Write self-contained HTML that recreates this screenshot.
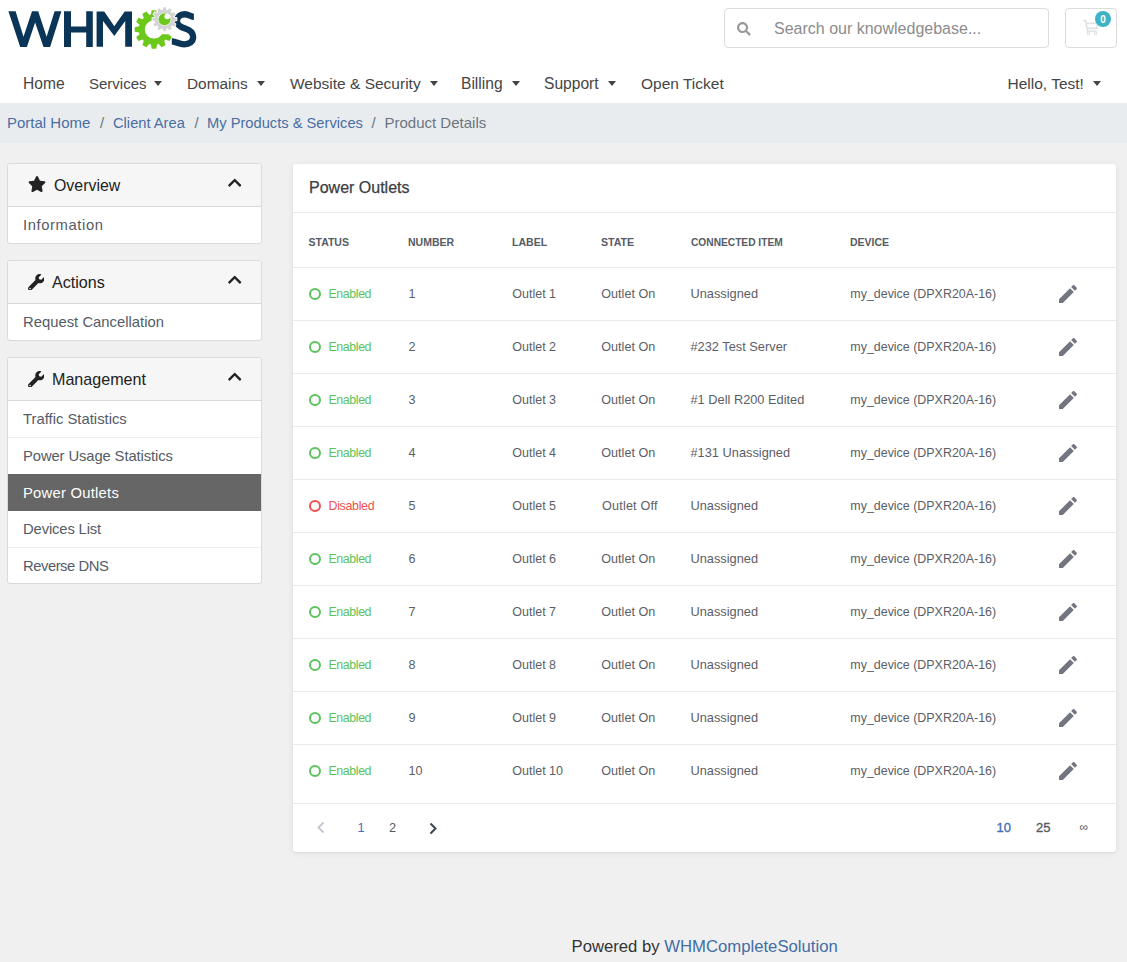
<!DOCTYPE html>
<html><head><meta charset="utf-8"><style>
html,body{margin:0;padding:0}
body{width:1127px;height:962px;overflow:hidden;position:relative;background:#f0f0f0;font-family:"Liberation Sans",sans-serif}
.t{position:absolute;white-space:nowrap;line-height:1;font-family:"Liberation Sans",sans-serif}
</style></head><body>
<div style="position:absolute;left:0;top:0;width:1127px;height:103px;background:#fff"></div><svg width="210" height="60" style="position:absolute;left:0;top:0" viewBox="0 0 210 60">
<defs><clipPath id="cg"><path d="M0,0H157V34.3H210V60H0Z"/></clipPath></defs>
<path fill="#0b3556" d="M8.4,11.2 L15.6,11.2 L23.5,36.8 L32,11.2 L38.2,11.2 L46.6,36.8 L54.6,11.2 L61.4,11.2 L50.1,46.9 L43.5,46.9 L35.1,22.6 L26.9,46.9 L20.2,46.9Z"/>
<path fill="#0b3556" d="M64,11.2H71V26.6H86.2V11.2H92.8V46.9H86.2V32.4H71V46.9H64Z"/>
<path fill="#0b3556" d="M96.6,11.4 L104.2,11.4 L114.3,26.3 L124.7,11.4 L132,11.4 L132,46.8 L125.2,46.8 L125.2,21.1 L114.3,36 L103,21.1 L103,46.8 L96.6,46.8Z"/>
<path fill="none" stroke="#0b3556" stroke-width="6.3" d="M193.9,16.9 C191.6,16.9 188.6,14.25 184.6,14.25 C179.9,14.25 176.95,16.9 176.95,20.9 C176.95,25.4 180.8,27.1 185.2,28.5 C190.3,30.1 193.15,32.4 193.15,37.1 C193.15,41.9 189.3,44.35 184.2,44.35 C179.6,44.35 174.6,41.4 171.8,41.4"/>
<path fill="#6cc91b" fill-rule="evenodd" clip-path="url(#cg)" d="M157.96,14.62 L157.16,14.43 L156.26,10.13 L151.74,10.13 L150.84,14.43 L150.04,14.62 L149.25,14.86 L146.33,11.58 L142.41,13.84 L143.78,18.01 L143.18,18.58 L142.61,19.18 L138.44,17.81 L136.18,21.73 L139.46,24.65 L139.22,25.44 L139.03,26.24 L134.73,27.14 L134.73,31.66 L139.03,32.56 L139.22,33.36 L139.46,34.15 L136.18,37.07 L138.44,40.99 L142.61,39.62 L143.18,40.22 L143.78,40.79 L142.41,44.96 L146.33,47.22 L149.25,43.94 L150.04,44.18 L150.84,44.37 L151.74,48.67 L156.26,48.67 L157.16,44.37 L157.96,44.18 L158.75,43.94 L161.67,47.22 L165.59,44.96 L164.22,40.79 L164.82,40.22 L165.39,39.62 L169.56,40.99 L171.82,37.07 L168.54,34.15 L168.78,33.36 L168.97,32.56 L173.27,31.66 L173.27,27.14 L168.97,26.24 L168.78,25.44 L168.54,24.65 L171.82,21.73 L169.56,17.81 L165.39,19.18 L164.82,18.58 L164.22,18.01 L165.59,13.84 L161.67,11.58 L158.75,14.86ZM144.80,29.40 a9.2,9.2 0 1,0 18.4,0 a9.2,9.2 0 1,0 -18.4,0Z"/>
<path fill="#d4d4d4" fill-rule="evenodd" stroke="#fff" stroke-width="1.6" paint-order="stroke" d="M166.98,9.93 L166.29,9.77 L165.72,7.16 L163.28,7.16 L162.71,9.77 L162.02,9.93 L161.33,10.14 L159.54,8.17 L157.43,9.38 L158.24,11.92 L157.71,12.41 L157.22,12.94 L154.68,12.13 L153.47,14.24 L155.44,16.03 L155.23,16.72 L155.07,17.41 L152.46,17.98 L152.46,20.42 L155.07,20.99 L155.23,21.68 L155.44,22.37 L153.47,24.16 L154.68,26.27 L157.22,25.46 L157.71,25.99 L158.24,26.48 L157.43,29.02 L159.54,30.23 L161.33,28.26 L162.02,28.47 L162.71,28.63 L163.28,31.24 L165.72,31.24 L166.29,28.63 L166.98,28.47 L167.67,28.26 L169.46,30.23 L171.57,29.02 L170.76,26.48 L171.29,25.99 L171.78,25.46 L174.32,26.27 L175.53,24.16 L173.56,22.37 L173.77,21.68 L173.93,20.99 L176.54,20.42 L176.54,17.98 L173.93,17.41 L173.77,16.72 L173.56,16.03 L175.53,14.24 L174.32,12.13 L171.78,12.94 L171.29,12.41 L170.76,11.92 L171.57,9.38 L169.46,8.17 L167.67,10.14ZM158.00,19.20 a6.5,6.5 0 1,0 13.0,0 a6.5,6.5 0 1,0 -13.0,0Z"/>
<circle cx="164.5" cy="19.3" r="6" fill="#6cc91b"/><circle cx="167.2" cy="16.5" r="2.8" fill="#fff"/>
</svg><div style="position:absolute;left:724px;top:8px;width:323px;height:38px;border:1px solid #dcdcdc;border-radius:4px;background:#fff"></div><svg style="position:absolute;left:737px;top:22px" width="13.7" height="13.7" viewBox="0 0 512 512"><path fill="#999" d="M505 442.7L405.3 343c-4.5-4.5-10.6-7-17-7H372c27.6-35.3 44-79.7 44-128C416 93.1 322.9 0 208 0S0 93.1 0 208s93.1 208 208 208c48.3 0 92.7-16.4 128-44v16.3c0 6.4 2.5 12.5 7 17l99.7 99.7c9.4 9.4 24.6 9.4 33.9 0l28.3-28.3c9.4-9.4 9.4-24.6.1-34zM208 336c-70.7 0-128-57.2-128-128 0-70.7 57.2-128 128-128 70.7 0 128 57.2 128 128 0 70.7-57.2 128-128 128z"/></svg><div class="t" style="left:774px;top:21.00px;font-size:16px;color:#8c8c8c;font-weight:normal;letter-spacing:0px;">Search our knowledgebase...</div><div style="position:absolute;left:1065px;top:8px;width:50px;height:38px;border:1px solid #dcdcdc;border-radius:4px;background:#fff"></div><svg style="position:absolute;left:1082px;top:18px" width="18" height="17" viewBox="0 0 18 17"><path d="M1,2.6 H3.6 L5.6,13.2 H14.6 M4.3,5.4 H15.6 L14.8,10.4 H5.1" fill="none" stroke="#e2e2e2" stroke-width="1.6"/><circle cx="6.5" cy="15.3" r="1.3" fill="none" stroke="#e2e2e2" stroke-width="1.1"/><circle cx="13.5" cy="15.3" r="1.3" fill="none" stroke="#e2e2e2" stroke-width="1.1"/></svg><div style="position:absolute;left:1095px;top:11px;width:16px;height:16px;border-radius:50%;background:#3fb3c6;color:#fff;font:bold 10px/18.3px 'Liberation Sans',sans-serif;text-align:center">0</div><div class="t" style="left:23px;top:76.01px;font-size:15.6px;color:#454545;font-weight:normal;letter-spacing:0px;">Home</div><div class="t" style="left:89px;top:76.01px;font-size:15px;color:#454545;font-weight:normal;letter-spacing:0px;">Services</div><div style="position:absolute;left:154px;top:81px;width:0;height:0;border-left:4.5px solid transparent;border-right:4.5px solid transparent;border-top:5px solid #444"></div><div class="t" style="left:187px;top:76.01px;font-size:15.4px;color:#454545;font-weight:normal;letter-spacing:0px;">Domains</div><div style="position:absolute;left:257px;top:81px;width:0;height:0;border-left:4.5px solid transparent;border-right:4.5px solid transparent;border-top:5px solid #444"></div><div class="t" style="left:290px;top:76.00px;font-size:15.5px;color:#454545;font-weight:normal;letter-spacing:0px;">Website &amp; Security</div><div style="position:absolute;left:429.5px;top:81px;width:0;height:0;border-left:4.5px solid transparent;border-right:4.5px solid transparent;border-top:5px solid #444"></div><div class="t" style="left:461px;top:76.01px;font-size:15.6px;color:#454545;font-weight:normal;letter-spacing:0px;">Billing</div><div style="position:absolute;left:511.5px;top:81px;width:0;height:0;border-left:4.5px solid transparent;border-right:4.5px solid transparent;border-top:5px solid #444"></div><div class="t" style="left:544px;top:76.01px;font-size:15.6px;color:#454545;font-weight:normal;letter-spacing:0px;">Support</div><div style="position:absolute;left:608px;top:81px;width:0;height:0;border-left:4.5px solid transparent;border-right:4.5px solid transparent;border-top:5px solid #444"></div><div class="t" style="left:641px;top:76.00px;font-size:15.5px;color:#454545;font-weight:normal;letter-spacing:0px;">Open Ticket</div><div class="t" style="left:1007.5px;top:76.00px;font-size:15.5px;color:#454545;font-weight:normal;letter-spacing:0px;">Hello, Test!</div><div style="position:absolute;left:1092.5px;top:81px;width:0;height:0;border-left:4.5px solid transparent;border-right:4.5px solid transparent;border-top:5px solid #444"></div><div style="position:absolute;left:0;top:103px;width:1127px;height:40px;background:#e9ecef"></div><div class="t" style="left:7px;top:115.01px;font-size:15px;color:#4a6ea3;font-weight:normal;letter-spacing:0px;">Portal Home</div><div class="t" style="left:100px;top:115.01px;font-size:15px;color:#6c757d;font-weight:normal;letter-spacing:0px;">/</div><div class="t" style="left:113px;top:116.01px;font-size:14.7px;color:#4a6ea3;font-weight:normal;letter-spacing:0px;">Client Area</div><div class="t" style="left:194.5px;top:115.01px;font-size:15px;color:#6c757d;font-weight:normal;letter-spacing:0px;">/</div><div class="t" style="left:207px;top:116.01px;font-size:14.7px;color:#4a6ea3;font-weight:normal;letter-spacing:0px;">My Products &amp; Services</div><div class="t" style="left:371.5px;top:115.01px;font-size:15px;color:#6c757d;font-weight:normal;letter-spacing:0px;">/</div><div class="t" style="left:384.5px;top:115.01px;font-size:15px;color:#6c757d;font-weight:normal;letter-spacing:0px;">Product Details</div><div style="position:absolute;left:7px;top:163px;width:253px;height:79px;border:1px solid #dadada;border-radius:3px;background:#fff;overflow:hidden"><div style="position:absolute;left:0;top:0;width:253px;height:42px;background:#f6f6f6;border-bottom:1px solid #d9d9d9"></div></div><div class="t" style="left:23px;top:218.00px;font-size:14.8px;color:#555b66;font-weight:normal;letter-spacing:0.6px;">Information</div><svg style="position:absolute;left:28px;top:176px" width="18" height="16" viewBox="0 0 576 512"><path fill="#222" d="M259.3 17.8L194 150.2 47.9 171.5c-26.2 3.8-36.7 36.1-17.7 54.6l105.7 103-25 145.5c-4.5 26.3 23.2 46 46.4 33.7L288 439.6l130.7 68.7c23.2 12.2 50.9-7.4 46.4-33.7l-25-145.5 105.7-103c19-18.5 8.5-50.8-17.7-54.6L382 150.2 316.7 17.8c-11.7-23.6-45.6-23.9-57.4 0z"/></svg><div class="t" style="left:54px;top:178.01px;font-size:15.9px;color:#222;font-weight:normal;letter-spacing:0px;">Overview</div><svg style="position:absolute;left:226.6px;top:174.6px" width="15.4" height="15.4" viewBox="0 0 448 512"><path fill="#222" d="M240.971 130.524l194.343 194.343c9.373 9.373 9.373 24.569 0 33.941l-22.667 22.667c-9.357 9.357-24.522 9.375-33.901.04L224 227.495 69.255 381.516c-9.379 9.335-24.544 9.317-33.901-.04l-22.667-22.667c-9.373-9.373-9.373-24.569 0-33.941L207.03 130.525c9.372-9.373 24.568-9.373 33.941-.001z"/></svg><div style="position:absolute;left:7px;top:260px;width:253px;height:79px;border:1px solid #dadada;border-radius:3px;background:#fff;overflow:hidden"><div style="position:absolute;left:0;top:0;width:253px;height:42px;background:#f6f6f6;border-bottom:1px solid #d9d9d9"></div></div><div class="t" style="left:23px;top:315.00px;font-size:14.8px;color:#555b66;font-weight:normal;letter-spacing:0.02px;">Request Cancellation</div><svg style="position:absolute;left:27.5px;top:273.5px" width="16.5" height="16.5" viewBox="0 0 512 512"><path fill="#222" d="M507.73 109.1c-2.24-9.03-13.54-12.09-20.12-5.51l-74.36 74.36-67.88-11.31-11.31-67.88 74.36-74.36c6.62-6.62 3.43-17.9-5.66-20.16-47.38-11.74-99.550.91-136.58 37.930-39.640 39.640-50.550 97.100-34.050 147.200L18.74 402.76c-24.99 24.99-24.99 65.51 0 90.5 24.99 24.990 65.510 24.990 90.500 0l213.21-213.21c50.12 16.71 107.47 5.68 147.37-34.22 37.07-37.07 49.7-89.32 37.91-136.73zM64 472c-13.25 0-24-10.75-24-24 0-13.26 10.75-24 24-24s24 10.74 24 24c0 13.25-10.75 24-24 24z"/></svg><div class="t" style="left:52px;top:274.01px;font-size:16.1px;color:#222;font-weight:normal;letter-spacing:0px;">Actions</div><svg style="position:absolute;left:226.6px;top:271.6px" width="15.4" height="15.4" viewBox="0 0 448 512"><path fill="#222" d="M240.971 130.524l194.343 194.343c9.373 9.373 9.373 24.569 0 33.941l-22.667 22.667c-9.357 9.357-24.522 9.375-33.901.04L224 227.495 69.255 381.516c-9.379 9.335-24.544 9.317-33.901-.04l-22.667-22.667c-9.373-9.373-9.373-24.569 0-33.941L207.03 130.525c9.372-9.373 24.568-9.373 33.941-.001z"/></svg><div style="position:absolute;left:7px;top:357px;width:253px;height:225px;border:1px solid #dadada;border-radius:3px;background:#fff;overflow:hidden"><div style="position:absolute;left:0;top:0;width:253px;height:42px;background:#f6f6f6;border-bottom:1px solid #d9d9d9"></div></div><div style="position:absolute;left:8px;top:437px;width:253px;height:1px;background:#efefef"></div><div style="position:absolute;left:8px;top:547px;width:253px;height:1px;background:#efefef"></div><div style="position:absolute;left:8px;top:474px;width:253px;height:37px;background:#666"></div><div class="t" style="left:23px;top:412.00px;font-size:14.8px;color:#555b66;font-weight:normal;letter-spacing:0.01px;">Traffic Statistics</div><div class="t" style="left:23px;top:449.01px;font-size:14.8px;color:#555b66;font-weight:normal;letter-spacing:-0.11px;">Power Usage Statistics</div><div class="t" style="left:23px;top:486.01px;font-size:14.8px;color:#fff;font-weight:normal;letter-spacing:0.24px;">Power Outlets</div><div class="t" style="left:23px;top:522.01px;font-size:14.8px;color:#555b66;font-weight:normal;letter-spacing:-0.14px;">Devices List</div><div class="t" style="left:23px;top:559.00px;font-size:14.8px;color:#555b66;font-weight:normal;letter-spacing:-0.47px;">Reverse DNS</div><svg style="position:absolute;left:27.5px;top:370.5px" width="16.5" height="16.5" viewBox="0 0 512 512"><path fill="#222" d="M507.73 109.1c-2.24-9.03-13.54-12.09-20.12-5.51l-74.36 74.36-67.88-11.31-11.31-67.88 74.36-74.36c6.62-6.62 3.43-17.9-5.66-20.16-47.38-11.74-99.550.91-136.58 37.930-39.640 39.640-50.550 97.100-34.050 147.200L18.74 402.76c-24.99 24.99-24.99 65.51 0 90.5 24.99 24.990 65.510 24.990 90.500 0l213.21-213.21c50.12 16.71 107.47 5.68 147.37-34.22 37.07-37.07 49.7-89.32 37.91-136.73zM64 472c-13.25 0-24-10.75-24-24 0-13.26 10.75-24 24-24s24 10.74 24 24c0 13.25-10.75 24-24 24z"/></svg><div class="t" style="left:52px;top:371.01px;font-size:16.1px;color:#222;font-weight:normal;letter-spacing:0px;">Management</div><svg style="position:absolute;left:226.6px;top:368.6px" width="15.4" height="15.4" viewBox="0 0 448 512"><path fill="#222" d="M240.971 130.524l194.343 194.343c9.373 9.373 9.373 24.569 0 33.941l-22.667 22.667c-9.357 9.357-24.522 9.375-33.901.04L224 227.495 69.255 381.516c-9.379 9.335-24.544 9.317-33.901-.04l-22.667-22.667c-9.373-9.373-9.373-24.569 0-33.941L207.03 130.525c9.372-9.373 24.568-9.373 33.941-.001z"/></svg><div style="position:absolute;left:293px;top:164px;width:823px;height:688px;background:#fff;border-radius:3px;box-shadow:0 1px 2px rgba(40,50,80,0.08),0 1px 7px rgba(40,50,80,0.07)"></div><div class="t" style="left:309px;top:180.00px;font-size:16px;color:#3a3d42;font-weight:normal;letter-spacing:0px;-webkit-text-stroke:0.25px #3a3d42">Power Outlets</div><div style="position:absolute;left:293px;top:212px;width:823px;height:1px;background:#e9eaef"></div><div style="position:absolute;left:293px;top:267px;width:823px;height:1px;background:#e9eaef"></div><div class="t" style="left:308.5px;top:237.00px;font-size:10.5px;color:#575b64;font-weight:bold;letter-spacing:0px;">STATUS</div><div class="t" style="left:408px;top:237.00px;font-size:10.5px;color:#575b64;font-weight:bold;letter-spacing:0px;">NUMBER</div><div class="t" style="left:512px;top:237.01px;font-size:10.6px;color:#575b64;font-weight:bold;letter-spacing:0px;">LABEL</div><div class="t" style="left:601px;top:237.01px;font-size:10.6px;color:#575b64;font-weight:bold;letter-spacing:0px;">STATE</div><div class="t" style="left:691px;top:238.01px;font-size:10.2px;color:#575b64;font-weight:bold;letter-spacing:0px;">CONNECTED ITEM</div><div class="t" style="left:850px;top:237.00px;font-size:10.5px;color:#575b64;font-weight:bold;letter-spacing:0px;">DEVICE</div><div style="position:absolute;left:309px;top:287.9px;width:8px;height:8px;border:2px solid #5cc35c;border-radius:50%"></div><div class="t" style="left:328.5px;top:288.00px;font-size:12.4px;color:#5cc35c;font-weight:normal;letter-spacing:-0.41px;">Enabled</div><div class="t" style="left:408.5px;top:288.01px;font-size:12.6px;color:#5b5e66;font-weight:normal;letter-spacing:0px;">1</div><div class="t" style="left:512.3px;top:288.01px;font-size:12.5px;color:#5b5e66;font-weight:normal;letter-spacing:0px;">Outlet 1</div><div class="t" style="left:601.3px;top:288.01px;font-size:12.6px;color:#5b5e66;font-weight:normal;letter-spacing:0px;">Outlet On</div><div class="t" style="left:690.5px;top:288.01px;font-size:12.8px;color:#5b5e66;font-weight:normal;letter-spacing:0px;">Unassigned</div><div class="t" style="left:850.3px;top:288.01px;font-size:12.45px;color:#5b5e66;font-weight:normal;letter-spacing:0px;">my_device (DPXR20A-16)</div><svg style="position:absolute;left:1055.5px;top:282px" width="24" height="24" viewBox="0 0 24 24"><path fill="#737680" d="M20.71,7.04C21.1,6.65 21.1,6 20.71,5.63L18.37,3.29C18,2.9 17.35,2.9 16.96,3.29L15.12,5.12L18.87,8.87M3,17.25V21H6.75L17.81,9.93L14.06,6.18L3,17.25Z"/></svg><div style="position:absolute;left:293px;top:320px;width:823px;height:1px;background:#e9eaef"></div><div style="position:absolute;left:309px;top:340.9px;width:8px;height:8px;border:2px solid #5cc35c;border-radius:50%"></div><div class="t" style="left:328.5px;top:341.00px;font-size:12.4px;color:#5cc35c;font-weight:normal;letter-spacing:-0.41px;">Enabled</div><div class="t" style="left:408.5px;top:341.01px;font-size:12.6px;color:#5b5e66;font-weight:normal;letter-spacing:0px;">2</div><div class="t" style="left:512.3px;top:341.01px;font-size:12.5px;color:#5b5e66;font-weight:normal;letter-spacing:0px;">Outlet 2</div><div class="t" style="left:601.3px;top:341.01px;font-size:12.6px;color:#5b5e66;font-weight:normal;letter-spacing:0px;">Outlet On</div><div class="t" style="left:690.5px;top:341.01px;font-size:12.8px;color:#5b5e66;font-weight:normal;letter-spacing:0px;">#232 Test Server</div><div class="t" style="left:850.3px;top:341.01px;font-size:12.45px;color:#5b5e66;font-weight:normal;letter-spacing:0px;">my_device (DPXR20A-16)</div><svg style="position:absolute;left:1055.5px;top:335px" width="24" height="24" viewBox="0 0 24 24"><path fill="#737680" d="M20.71,7.04C21.1,6.65 21.1,6 20.71,5.63L18.37,3.29C18,2.9 17.35,2.9 16.96,3.29L15.12,5.12L18.87,8.87M3,17.25V21H6.75L17.81,9.93L14.06,6.18L3,17.25Z"/></svg><div style="position:absolute;left:293px;top:373px;width:823px;height:1px;background:#e9eaef"></div><div style="position:absolute;left:309px;top:393.9px;width:8px;height:8px;border:2px solid #5cc35c;border-radius:50%"></div><div class="t" style="left:328.5px;top:394.00px;font-size:12.4px;color:#5cc35c;font-weight:normal;letter-spacing:-0.41px;">Enabled</div><div class="t" style="left:408.5px;top:394.01px;font-size:12.6px;color:#5b5e66;font-weight:normal;letter-spacing:0px;">3</div><div class="t" style="left:512.3px;top:394.01px;font-size:12.5px;color:#5b5e66;font-weight:normal;letter-spacing:0px;">Outlet 3</div><div class="t" style="left:601.3px;top:394.01px;font-size:12.6px;color:#5b5e66;font-weight:normal;letter-spacing:0px;">Outlet On</div><div class="t" style="left:690.5px;top:394.01px;font-size:12.8px;color:#5b5e66;font-weight:normal;letter-spacing:0px;">#1 Dell R200 Edited</div><div class="t" style="left:850.3px;top:394.01px;font-size:12.45px;color:#5b5e66;font-weight:normal;letter-spacing:0px;">my_device (DPXR20A-16)</div><svg style="position:absolute;left:1055.5px;top:388px" width="24" height="24" viewBox="0 0 24 24"><path fill="#737680" d="M20.71,7.04C21.1,6.65 21.1,6 20.71,5.63L18.37,3.29C18,2.9 17.35,2.9 16.96,3.29L15.12,5.12L18.87,8.87M3,17.25V21H6.75L17.81,9.93L14.06,6.18L3,17.25Z"/></svg><div style="position:absolute;left:293px;top:426px;width:823px;height:1px;background:#e9eaef"></div><div style="position:absolute;left:309px;top:446.9px;width:8px;height:8px;border:2px solid #5cc35c;border-radius:50%"></div><div class="t" style="left:328.5px;top:447.00px;font-size:12.4px;color:#5cc35c;font-weight:normal;letter-spacing:-0.41px;">Enabled</div><div class="t" style="left:408.5px;top:447.01px;font-size:12.6px;color:#5b5e66;font-weight:normal;letter-spacing:0px;">4</div><div class="t" style="left:512.3px;top:447.01px;font-size:12.5px;color:#5b5e66;font-weight:normal;letter-spacing:0px;">Outlet 4</div><div class="t" style="left:601.3px;top:447.01px;font-size:12.6px;color:#5b5e66;font-weight:normal;letter-spacing:0px;">Outlet On</div><div class="t" style="left:690.5px;top:447.01px;font-size:12.8px;color:#5b5e66;font-weight:normal;letter-spacing:0px;">#131 Unassigned</div><div class="t" style="left:850.3px;top:447.01px;font-size:12.45px;color:#5b5e66;font-weight:normal;letter-spacing:0px;">my_device (DPXR20A-16)</div><svg style="position:absolute;left:1055.5px;top:441px" width="24" height="24" viewBox="0 0 24 24"><path fill="#737680" d="M20.71,7.04C21.1,6.65 21.1,6 20.71,5.63L18.37,3.29C18,2.9 17.35,2.9 16.96,3.29L15.12,5.12L18.87,8.87M3,17.25V21H6.75L17.81,9.93L14.06,6.18L3,17.25Z"/></svg><div style="position:absolute;left:293px;top:479px;width:823px;height:1px;background:#e9eaef"></div><div style="position:absolute;left:309px;top:499.9px;width:8px;height:8px;border:2px solid #ef4f4f;border-radius:50%"></div><div class="t" style="left:328.5px;top:500.00px;font-size:12.4px;color:#ef4f4f;font-weight:normal;letter-spacing:-0.31px;">Disabled</div><div class="t" style="left:408.5px;top:500.01px;font-size:12.6px;color:#5b5e66;font-weight:normal;letter-spacing:0px;">5</div><div class="t" style="left:512.3px;top:500.01px;font-size:12.5px;color:#5b5e66;font-weight:normal;letter-spacing:0px;">Outlet 5</div><div class="t" style="left:602px;top:500.01px;font-size:12.6px;color:#5b5e66;font-weight:normal;letter-spacing:0.2px;">Outlet Off</div><div class="t" style="left:690.5px;top:500.01px;font-size:12.8px;color:#5b5e66;font-weight:normal;letter-spacing:0px;">Unassigned</div><div class="t" style="left:850.3px;top:500.01px;font-size:12.45px;color:#5b5e66;font-weight:normal;letter-spacing:0px;">my_device (DPXR20A-16)</div><svg style="position:absolute;left:1055.5px;top:494px" width="24" height="24" viewBox="0 0 24 24"><path fill="#737680" d="M20.71,7.04C21.1,6.65 21.1,6 20.71,5.63L18.37,3.29C18,2.9 17.35,2.9 16.96,3.29L15.12,5.12L18.87,8.87M3,17.25V21H6.75L17.81,9.93L14.06,6.18L3,17.25Z"/></svg><div style="position:absolute;left:293px;top:532px;width:823px;height:1px;background:#e9eaef"></div><div style="position:absolute;left:309px;top:552.9px;width:8px;height:8px;border:2px solid #5cc35c;border-radius:50%"></div><div class="t" style="left:328.5px;top:553.00px;font-size:12.4px;color:#5cc35c;font-weight:normal;letter-spacing:-0.41px;">Enabled</div><div class="t" style="left:408.5px;top:553.01px;font-size:12.6px;color:#5b5e66;font-weight:normal;letter-spacing:0px;">6</div><div class="t" style="left:512.3px;top:553.01px;font-size:12.5px;color:#5b5e66;font-weight:normal;letter-spacing:0px;">Outlet 6</div><div class="t" style="left:601.3px;top:553.01px;font-size:12.6px;color:#5b5e66;font-weight:normal;letter-spacing:0px;">Outlet On</div><div class="t" style="left:690.5px;top:553.01px;font-size:12.8px;color:#5b5e66;font-weight:normal;letter-spacing:0px;">Unassigned</div><div class="t" style="left:850.3px;top:553.01px;font-size:12.45px;color:#5b5e66;font-weight:normal;letter-spacing:0px;">my_device (DPXR20A-16)</div><svg style="position:absolute;left:1055.5px;top:547px" width="24" height="24" viewBox="0 0 24 24"><path fill="#737680" d="M20.71,7.04C21.1,6.65 21.1,6 20.71,5.63L18.37,3.29C18,2.9 17.35,2.9 16.96,3.29L15.12,5.12L18.87,8.87M3,17.25V21H6.75L17.81,9.93L14.06,6.18L3,17.25Z"/></svg><div style="position:absolute;left:293px;top:585px;width:823px;height:1px;background:#e9eaef"></div><div style="position:absolute;left:309px;top:605.9px;width:8px;height:8px;border:2px solid #5cc35c;border-radius:50%"></div><div class="t" style="left:328.5px;top:606.00px;font-size:12.4px;color:#5cc35c;font-weight:normal;letter-spacing:-0.41px;">Enabled</div><div class="t" style="left:408.5px;top:606.01px;font-size:12.6px;color:#5b5e66;font-weight:normal;letter-spacing:0px;">7</div><div class="t" style="left:512.3px;top:606.01px;font-size:12.5px;color:#5b5e66;font-weight:normal;letter-spacing:0px;">Outlet 7</div><div class="t" style="left:601.3px;top:606.01px;font-size:12.6px;color:#5b5e66;font-weight:normal;letter-spacing:0px;">Outlet On</div><div class="t" style="left:690.5px;top:606.01px;font-size:12.8px;color:#5b5e66;font-weight:normal;letter-spacing:0px;">Unassigned</div><div class="t" style="left:850.3px;top:606.01px;font-size:12.45px;color:#5b5e66;font-weight:normal;letter-spacing:0px;">my_device (DPXR20A-16)</div><svg style="position:absolute;left:1055.5px;top:600px" width="24" height="24" viewBox="0 0 24 24"><path fill="#737680" d="M20.71,7.04C21.1,6.65 21.1,6 20.71,5.63L18.37,3.29C18,2.9 17.35,2.9 16.96,3.29L15.12,5.12L18.87,8.87M3,17.25V21H6.75L17.81,9.93L14.06,6.18L3,17.25Z"/></svg><div style="position:absolute;left:293px;top:638px;width:823px;height:1px;background:#e9eaef"></div><div style="position:absolute;left:309px;top:658.9px;width:8px;height:8px;border:2px solid #5cc35c;border-radius:50%"></div><div class="t" style="left:328.5px;top:659.00px;font-size:12.4px;color:#5cc35c;font-weight:normal;letter-spacing:-0.41px;">Enabled</div><div class="t" style="left:408.5px;top:659.01px;font-size:12.6px;color:#5b5e66;font-weight:normal;letter-spacing:0px;">8</div><div class="t" style="left:512.3px;top:659.01px;font-size:12.5px;color:#5b5e66;font-weight:normal;letter-spacing:0px;">Outlet 8</div><div class="t" style="left:601.3px;top:659.01px;font-size:12.6px;color:#5b5e66;font-weight:normal;letter-spacing:0px;">Outlet On</div><div class="t" style="left:690.5px;top:659.01px;font-size:12.8px;color:#5b5e66;font-weight:normal;letter-spacing:0px;">Unassigned</div><div class="t" style="left:850.3px;top:659.01px;font-size:12.45px;color:#5b5e66;font-weight:normal;letter-spacing:0px;">my_device (DPXR20A-16)</div><svg style="position:absolute;left:1055.5px;top:653px" width="24" height="24" viewBox="0 0 24 24"><path fill="#737680" d="M20.71,7.04C21.1,6.65 21.1,6 20.71,5.63L18.37,3.29C18,2.9 17.35,2.9 16.96,3.29L15.12,5.12L18.87,8.87M3,17.25V21H6.75L17.81,9.93L14.06,6.18L3,17.25Z"/></svg><div style="position:absolute;left:293px;top:691px;width:823px;height:1px;background:#e9eaef"></div><div style="position:absolute;left:309px;top:711.9px;width:8px;height:8px;border:2px solid #5cc35c;border-radius:50%"></div><div class="t" style="left:328.5px;top:712.00px;font-size:12.4px;color:#5cc35c;font-weight:normal;letter-spacing:-0.41px;">Enabled</div><div class="t" style="left:408.5px;top:712.01px;font-size:12.6px;color:#5b5e66;font-weight:normal;letter-spacing:0px;">9</div><div class="t" style="left:512.3px;top:712.01px;font-size:12.5px;color:#5b5e66;font-weight:normal;letter-spacing:0px;">Outlet 9</div><div class="t" style="left:601.3px;top:712.01px;font-size:12.6px;color:#5b5e66;font-weight:normal;letter-spacing:0px;">Outlet On</div><div class="t" style="left:690.5px;top:712.01px;font-size:12.8px;color:#5b5e66;font-weight:normal;letter-spacing:0px;">Unassigned</div><div class="t" style="left:850.3px;top:712.01px;font-size:12.45px;color:#5b5e66;font-weight:normal;letter-spacing:0px;">my_device (DPXR20A-16)</div><svg style="position:absolute;left:1055.5px;top:706px" width="24" height="24" viewBox="0 0 24 24"><path fill="#737680" d="M20.71,7.04C21.1,6.65 21.1,6 20.71,5.63L18.37,3.29C18,2.9 17.35,2.9 16.96,3.29L15.12,5.12L18.87,8.87M3,17.25V21H6.75L17.81,9.93L14.06,6.18L3,17.25Z"/></svg><div style="position:absolute;left:293px;top:744px;width:823px;height:1px;background:#e9eaef"></div><div style="position:absolute;left:309px;top:764.9px;width:8px;height:8px;border:2px solid #5cc35c;border-radius:50%"></div><div class="t" style="left:328.5px;top:765.00px;font-size:12.4px;color:#5cc35c;font-weight:normal;letter-spacing:-0.41px;">Enabled</div><div class="t" style="left:408.5px;top:765.01px;font-size:12.6px;color:#5b5e66;font-weight:normal;letter-spacing:0px;">10</div><div class="t" style="left:512.3px;top:765.01px;font-size:12.5px;color:#5b5e66;font-weight:normal;letter-spacing:0px;">Outlet 10</div><div class="t" style="left:601.3px;top:765.01px;font-size:12.6px;color:#5b5e66;font-weight:normal;letter-spacing:0px;">Outlet On</div><div class="t" style="left:690.5px;top:765.01px;font-size:12.8px;color:#5b5e66;font-weight:normal;letter-spacing:0px;">Unassigned</div><div class="t" style="left:850.3px;top:765.01px;font-size:12.45px;color:#5b5e66;font-weight:normal;letter-spacing:0px;">my_device (DPXR20A-16)</div><svg style="position:absolute;left:1055.5px;top:759px" width="24" height="24" viewBox="0 0 24 24"><path fill="#737680" d="M20.71,7.04C21.1,6.65 21.1,6 20.71,5.63L18.37,3.29C18,2.9 17.35,2.9 16.96,3.29L15.12,5.12L18.87,8.87M3,17.25V21H6.75L17.81,9.93L14.06,6.18L3,17.25Z"/></svg><div style="position:absolute;left:293px;top:803px;width:823px;height:1px;background:#e9eaef"></div><svg style="position:absolute;left:315px;top:820px" width="12" height="15" viewBox="0 0 12 15"><path d="M8.5,2.5 L3.5,7.5 L8.5,12.5" fill="none" stroke="#c4c6cc" stroke-width="1.8"/></svg><div class="t" style="left:357.5px;top:822.01px;font-size:12.8px;color:#3f6fb5;font-weight:normal;letter-spacing:0px;">1</div><div class="t" style="left:389px;top:822.01px;font-size:12.8px;color:#555a64;font-weight:normal;letter-spacing:0px;">2</div><svg style="position:absolute;left:426.5px;top:820.5px" width="12" height="15" viewBox="0 0 12 15"><path d="M3.5,2.5 L8.5,7.5 L3.5,12.5" fill="none" stroke="#3e4450" stroke-width="2"/></svg><div class="t" style="left:996.5px;top:821.00px;font-size:13px;color:#3f6fb5;font-weight:normal;letter-spacing:0px;-webkit-text-stroke:0.35px #3f6fb5">10</div><div class="t" style="left:1036px;top:821.00px;font-size:13px;color:#555a64;font-weight:normal;letter-spacing:0px;-webkit-text-stroke:0.35px #555a64">25</div><div class="t" style="left:1079.5px;top:821.01px;font-size:12px;color:#555a64;font-weight:normal;letter-spacing:0px;">&#8734;</div><div class="t" style="left:571.5px;top:939.00px;font-size:16.7px;color:#333;font-weight:normal;letter-spacing:0px;">Powered by <span style="color:#426da6">WHMCompleteSolution</span></div>
</body></html>
